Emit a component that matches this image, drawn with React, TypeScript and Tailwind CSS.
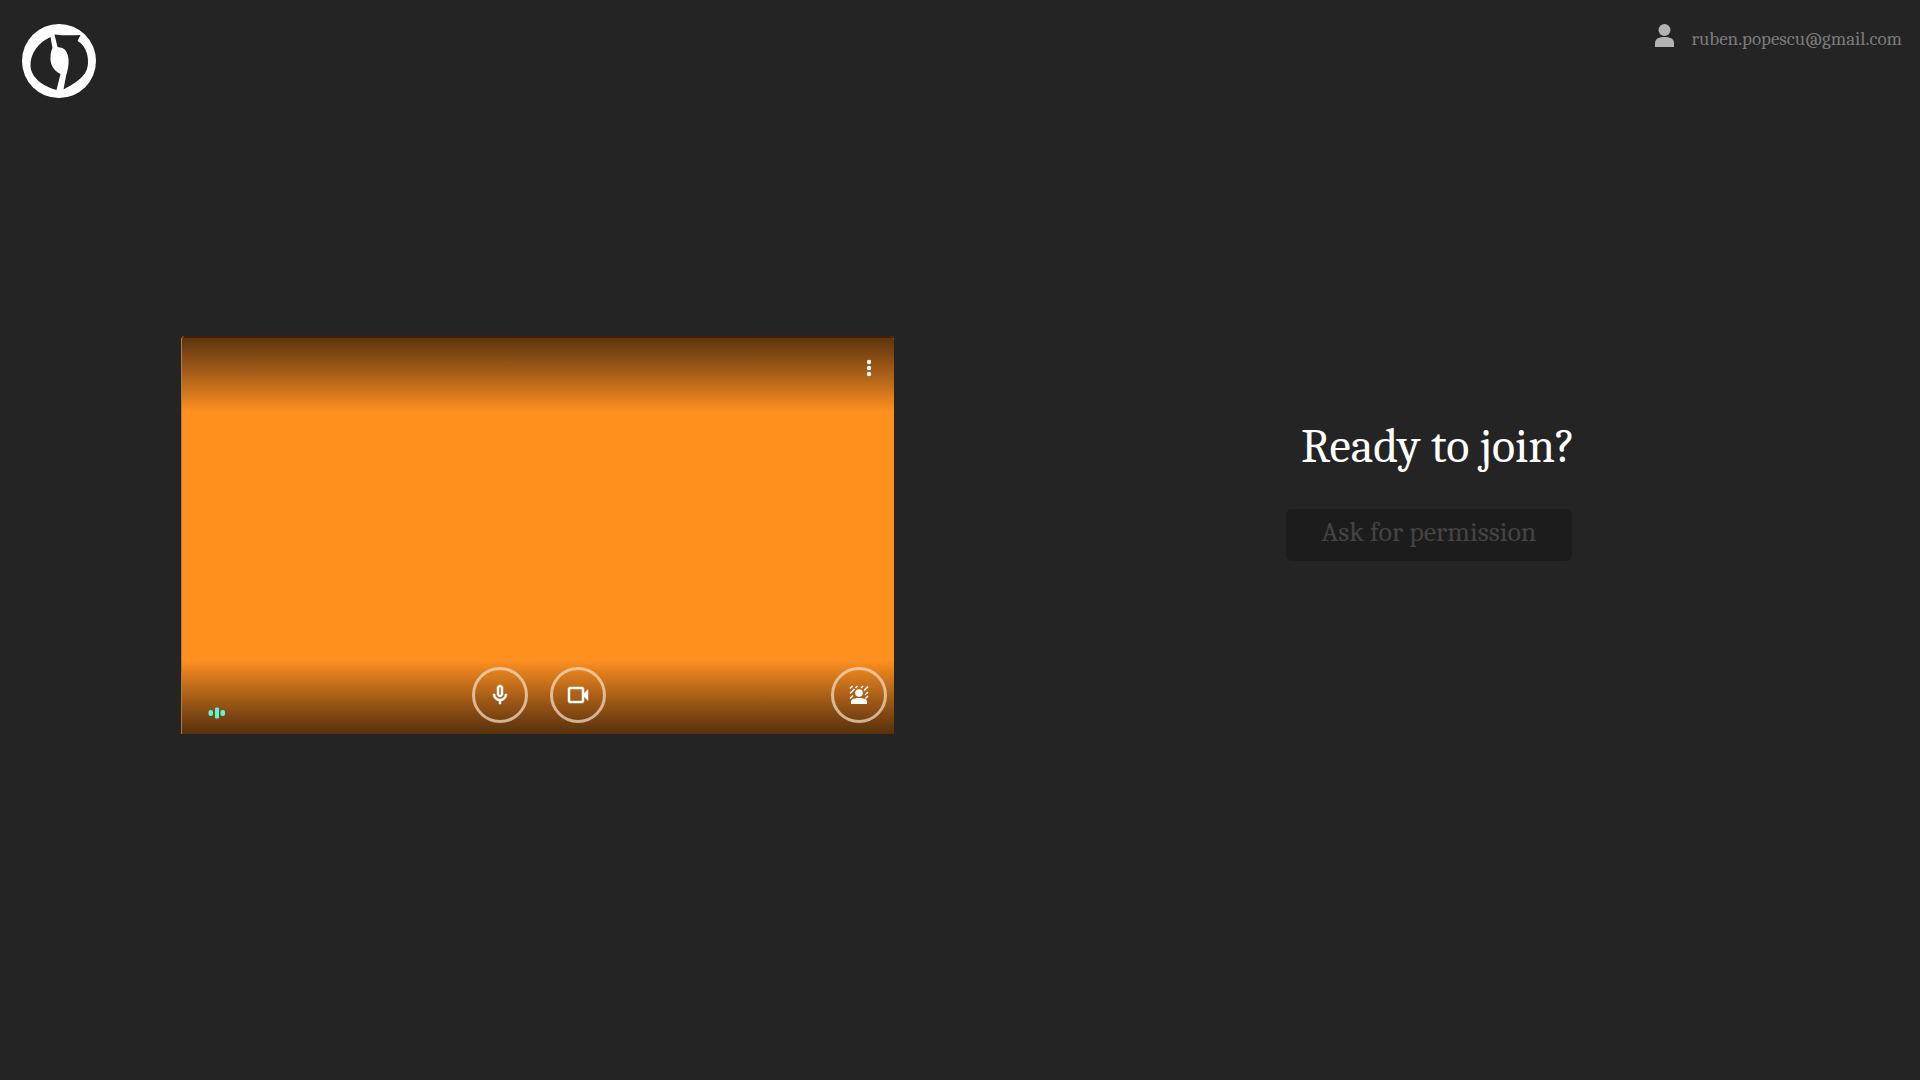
import React from 'react';

function Logo() {
  return (
    <svg viewBox="0 0 100 100" className="size-[100px]" role="img" aria-label="Logo">
      <circle cx="49" cy="51" r="37" fill="#fff" />
      <path d="M40.500 27C29 32 20 43 20.500 56C21 67 32 76 46.500 80L50.500 64C43 60 40 54 40.500 47C40.500 42 42 39 42.500 38Z" fill="#242424" />
      <path d="M44.500 24.500C53 25.500 62 25.500 70.500 25L67.500 31C74 34 78.500 43 78 53C77.500 66 67 72 53.500 79.500L56 66C60 54 60 42 52.500 38L47.500 37Z" fill="#242424" />
    </svg>
  );
}

function PersonIcon() {
  return (
    <svg viewBox="0 0 20 24" className="h-6 w-5" fill="#b3b3b3" aria-hidden="true">
      <circle cx="9.500" cy="6" r="6" />
      <path d="M0 23v-4C0 14.500 4.500 13 9.500 13s9.500 1.500 9.500 6v4z" />
    </svg>
  );
}

function MicIcon() {
  return (
    <svg viewBox="0 0 24 24" className="size-6" fill="#fff" stroke="#fff" strokeWidth="0.500" aria-hidden="true">
      <path d="M12 14c1.660 0 3-1.340 3-3V5c0-1.660-1.340-3-3-3S9 3.340 9 5v6c0 1.660 1.340 3 3 3zm-1-9c0-.55.45-1 1-1s1 .45 1 1v6c0 .55-.45 1-1 1s-1-.45-1-1V5zm6 6c0 2.760-2.240 5-5 5s-5-2.240-5-5H5c0 3.530 2.610 6.430 6 6.920V21h2v-3.080c3.390-.49 6-3.390 6-6.920h-2z" />
    </svg>
  );
}

function CameraIcon() {
  return (
    <svg viewBox="0 0 24 24" className="size-6" fill="#fff" stroke="#fff" strokeWidth="0.500" aria-hidden="true">
      <path d="M18 10.480V6c0-1.100-.9-2-2-2H4c-1.100 0-2 .9-2 2v12c0 1.100.9 2 2 2h12c1.100 0 2-.9 2-2v-4.480l4 3.980v-11l-4 3.980zM16 18H4V6h12v12z" />
    </svg>
  );
}

function EffectsIcon() {
  return (
    <svg viewBox="0 0 24 24" className="size-6" aria-hidden="true">
      <g stroke="#fff" strokeWidth="1.500" fill="none">
        <path d="M3 5.500L5.500 3M3 10.500L7.500 6M8.500 5L10.500 3M3 15.500L6 12.500M14 5L16 3M17 7.500L21 3.500M18 12L21 9M18.500 15.500L21 13" />
      </g>
      <circle cx="12" cy="10" r="3.800" fill="#fff" />
      <path d="M4 21v-2.500C4 16 8 15 12 15s8 1 8 3.500V21z" fill="#fff" />
    </svg>
  );
}

function MoreIcon() {
  return (
    <svg viewBox="0 0 24 24" className="size-6" fill="#fff" aria-hidden="true">
      <circle cx="12" cy="6" r="2.200" />
      <circle cx="12" cy="12" r="2.200" />
      <circle cx="12" cy="18" r="2.200" />
    </svg>
  );
}

function AudioLevel() {
  return (
    <svg viewBox="0 0 18 12" className="h-3 w-[18px]" fill="#5ff5dc" role="img" aria-label="Audio level">
      <rect x="0.500" y="3" width="4.500" height="6" rx="2" />
      <rect x="7" y="0.500" width="4" height="11" rx="1" />
      <rect x="12.500" y="3" width="4.500" height="6" rx="2" />
    </svg>
  );
}

function RoundButton({ label, children }: { label: string; children: React.ReactNode }) {
  return (
    <button
      type="button"
      aria-label={label}
      className="flex size-14 items-center justify-center rounded-full border-[3px] border-[#f0d9c0]/75"
    >
      {children}
    </button>
  );
}

function Preview() {
  return (
    <section
      aria-label="Camera preview"
      className="flex aspect-[713/398] flex-1 flex-col justify-between overflow-hidden rounded-t-sm border-l border-[#b0793f] bg-[#ff9020]"
    >
      <div className="flex h-[76px] items-start justify-end border-t-2 border-[#421e08] bg-linear-to-b from-[#5e350e] to-[#ff9020] pt-[18px] pr-[13px]">
        <button type="button" aria-label="More options">
          <MoreIcon />
        </button>
      </div>
      <div className="grid h-[74px] grid-cols-[1fr_auto_1fr] items-end bg-linear-to-b from-[#ff9020] to-[#57300c] pr-[7px] pb-[11px] pl-[26px]">
        <div className="pb-1">
          <AudioLevel />
        </div>
        <div className="-ml-[18px] flex gap-[22px]">
          <RoundButton label="Turn off microphone">
            <MicIcon />
          </RoundButton>
          <RoundButton label="Turn off camera">
            <CameraIcon />
          </RoundButton>
        </div>
        <div className="flex justify-end">
          <RoundButton label="Apply visual effects">
            <EffectsIcon />
          </RoundButton>
        </div>
      </div>
    </section>
  );
}

export default function App() {
  return (
    <div className="min-h-screen bg-[#242424] font-[Cambria,Caladea,'Liberation_Serif',serif] text-white">
      <header className="flex items-start justify-between pt-[10px] pr-[18px] pl-[10px]">
        <Logo />
        <div className="flex items-start gap-4 pt-[14px]">
          <PersonIcon />
          <span className="pt-[3px] text-[19px] leading-6 text-[#7a7a7a]">ruben.popescu@gmail.com</span>
        </div>
      </header>
      <main className="flex items-start gap-[392px] pt-[226px] pr-[348px] pl-[181px]">
        <Preview />
        <section className="flex w-[286px] flex-col gap-[34px] pt-[83px]">
          <h1 className="pl-[15px] text-5xl leading-[56px] whitespace-nowrap">Ready to join?</h1>
          <button
            type="button"
            disabled
            className="h-[52px] rounded-md bg-[#1c1c1c] pb-1.5 text-[28px] leading-8 text-[#454343]"
          >
            Ask for permission
          </button>
        </section>
      </main>
    </div>
  );
}
